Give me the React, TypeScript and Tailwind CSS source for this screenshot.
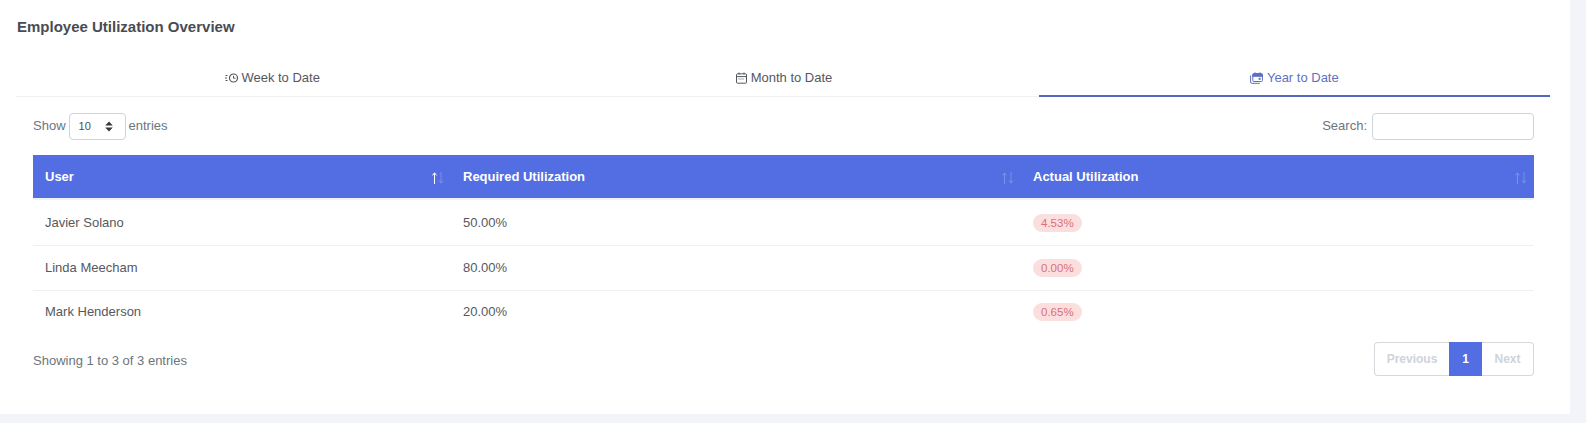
import React from 'react';

const rows = [
  { user: 'Javier Solano', required: '50.00%', actual: '4.53%' },
  { user: 'Linda Meecham', required: '80.00%', actual: '0.00%' },
  { user: 'Mark Henderson', required: '20.00%', actual: '0.65%' },
];

const WeekIcon = () => (
  <svg width="14" height="12" viewBox="0 0 14 12" fill="none" stroke="currentColor" strokeWidth="1">
    <path d="M0.5 3.5h2M0 6h2M0.5 8.5h2" />
    <circle cx="8.5" cy="6" r="4" strokeWidth="1.2" />
    <path d="M8.5 3.8V6.2h2" />
  </svg>
);

const MonthIcon = () => (
  <svg width="11" height="12" viewBox="0 0 11 12" fill="none" stroke="currentColor" strokeWidth="1">
    <rect x="0.5" y="1.8" width="10" height="9.4" rx="1" />
    <path d="M0.5 4.6h10M3 0.5v2M8 0.5v2" />
    <path d="M2.5 7h6" strokeDasharray="1 1" />
  </svg>
);

const YearIcon = () => (
  <svg width="13" height="12" viewBox="0 0 13 12" fill="none" stroke="currentColor" strokeWidth="1">
    <path d="M0.6 3.5v6.6a1.2 1.2 0 0 0 1.2 1.2h8" />
    <rect x="2.8" y="1.5" width="9.6" height="8" rx="1" />
    <path d="M2.8 2.5h9.6v1.8H2.8z" fill="currentColor" />
    <path d="M5 0.3v1.6M10 0.3v1.6" />
    <rect x="8.6" y="5.8" width="2" height="2" fill="currentColor" stroke="none" />
  </svg>
);

const SortIcon = ({ active }: { active?: boolean }) => (
  <svg width="14" height="14" viewBox="0 0 14 14" fill="none" strokeWidth="1" className="mt-[2px] shrink-0">
    <path d="M3.5 13V2M1.5 4.4 3.5 1.8l2 2.6" stroke={active ? '#ffffff' : '#7d90ea'} />
    <path d="M10 1v11M8 9.6 10 12.2l2-2.6" stroke="#7d90ea" />
  </svg>
);

const Th = ({ label, width, active }: { label: string; width: string; active?: boolean }) => (
  <th className={`${width} p-0 pl-3 pr-[6px] text-left text-[13px] font-bold text-white`}>
    <div className="flex items-center justify-between pt-px">
      {label}
      <SortIcon active={active} />
    </div>
  </th>
);

export default function App() {
  return (
    <div className="min-h-screen bg-[#f3f4f9] font-['Liberation_Sans',Arial,sans-serif]">
      <div className="h-[414px] w-[1570px] bg-white pl-4 pr-5 pt-[18px]">
        <h5 className="pl-px text-[15px] leading-[18px] font-bold text-[#484c52]">Employee Utilization Overview</h5>

        <div className="mt-6 grid h-[37px] grid-cols-3 border-b border-[#eff1f3] text-[13px] text-[#53585f]">
          <div className="flex items-center justify-center gap-[2px] pl-[2px]">
            <WeekIcon />
            <span>Week to Date</span>
          </div>
          <div className="flex items-center justify-center gap-1 pl-[2px]">
            <MonthIcon />
            <span>Month to Date</span>
          </div>
          <div className="-mb-px flex items-center justify-center gap-1 border-b-2 border-[#5568c0] text-[#5f70c0]">
            <YearIcon />
            <span>Year to Date</span>
          </div>
        </div>

        <div className="pl-[17px] pr-4">
          <div className="mt-4 flex h-[26px] items-center justify-between text-[13px] text-[#6c757d]">
            <div className="flex items-center">
              Show
              <div className="mx-[3px] flex h-[27px] w-[57px] items-center justify-between rounded border border-[#ced4da] pl-[9px] pr-[12px] text-[11px] text-[#495057]">
                10
                <svg width="8" height="11" viewBox="0 0 8 11" fill="#343a40">
                  <path d="M4 0.5 7.8 4.4H0.2zM4 10.5 0.2 6.6h7.6z" />
                </svg>
              </div>
              entries
            </div>
            <label className="flex items-center gap-[5px]">
              Search:
              <input type="text" className="h-[27px] w-[162px] rounded border border-[#ced4da] bg-white" />
            </label>
          </div>

          <table className="mt-4 w-full table-fixed border-collapse">
            <thead>
              <tr className="h-[43px] bg-[#536de2]">
                <Th label="User" width="w-[418px]" active />
                <Th label="Required Utilization" width="w-[570px]" />
                <Th label="Actual Utilization" width="w-[513px]" />
              </tr>
            </thead>
            <tbody className="text-[13px] text-[#55595e]">
              <tr className="h-[2px] bg-[#eef2f7]">
                <td colSpan={3} className="p-0" />
              </tr>
              {rows.map((row, i) => (
                <tr key={row.user} className={i < rows.length - 1 ? 'h-[45px] border-b border-[#eef0f3]' : 'h-[43px]'}>
                  <td className="p-0 pl-3">{row.user}</td>
                  <td className="p-0 pl-3">{row.required}</td>
                  <td className="p-0 pl-3">
                    <span className="inline-block rounded-full bg-[#fbdfdf] px-2 text-[11.5px] leading-[18px] text-[#d9707a]">
                      {row.actual}
                    </span>
                  </td>
                </tr>
              ))}
            </tbody>
          </table>

          <div className="mt-[9px] flex items-center justify-between">
            <span className="pt-[3px] text-[13px] text-[#6c757d]">Showing 1 to 3 of 3 entries</span>
            <div className="flex h-[34px] text-[12px]">
              <span className="flex w-[75px] items-center justify-center rounded-l border border-r-0 border-[#d5d9de] font-bold text-[#ced4da]">
                Previous
              </span>
              <span className="flex w-[33px] items-center justify-center bg-[#536de2] font-bold text-white">1</span>
              <span className="flex w-[52px] items-center justify-center rounded-r border border-l-0 border-[#d5d9de] font-bold text-[#ced4da]">
                Next
              </span>
            </div>
          </div>
        </div>
      </div>
    </div>
  );
}
